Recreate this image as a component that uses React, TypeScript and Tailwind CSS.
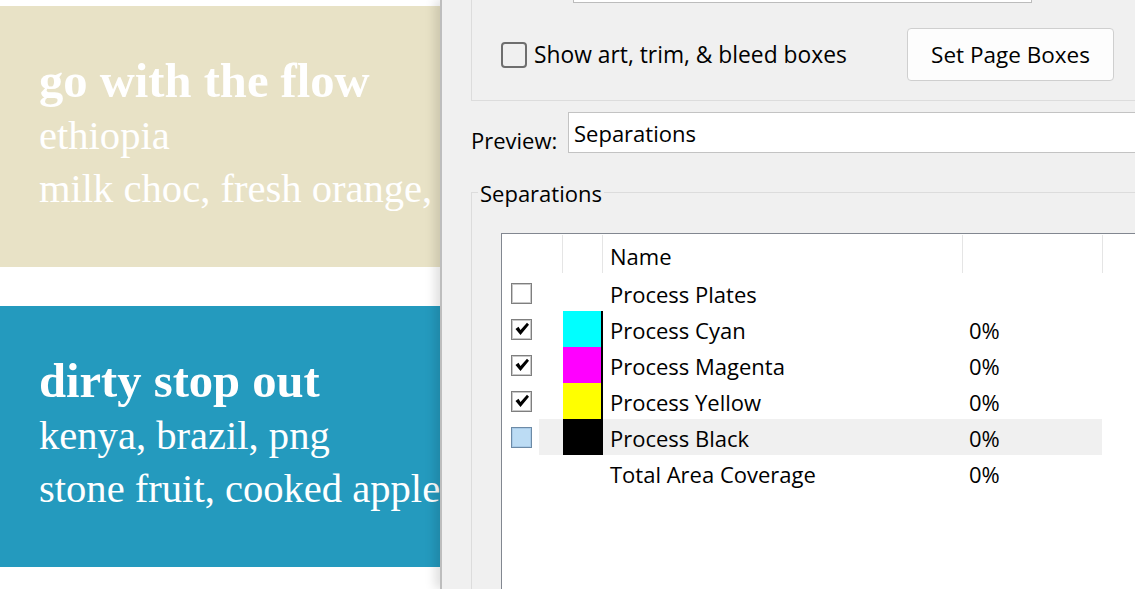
import React from "react";

type Row = {
  name: string;
  swatch?: string;
  pct?: string;
  check: "off" | "on" | "hover" | "none";
  highlight?: boolean;
};

const rows: Row[] = [
  { name: "Process Plates", check: "off" },
  { name: "Process Cyan", swatch: "bg-[#00ffff]", pct: "0%", check: "on" },
  { name: "Process Magenta", swatch: "bg-[#ff00ff]", pct: "0%", check: "on" },
  { name: "Process Yellow", swatch: "bg-[#ffff00]", pct: "0%", check: "on" },
  { name: "Process Black", swatch: "bg-black", pct: "0%", check: "hover", highlight: true },
  { name: "Total Area Coverage", pct: "0%", check: "none" },
];

function ClassicCheck({ state }: { state: Row["check"] }) {
  if (state === "none") return null;
  const hover = state === "hover";
  return (
    <div
      className={`flex h-[21px] w-[21px] items-center justify-center border ${
        hover
          ? "border-[#6c8aa6] bg-[#bcdcf4] shadow-[inset_0_0_0_1px_#a9cbe8]"
          : "border-[#7f7f7f] bg-white shadow-[inset_0_0_0_1px_#c9c9c9]"
      }`}
    >
      {state === "on" && (
        <svg width="16" height="16" viewBox="0 0 16 16">
          <path d="M1.5 8 L4.5 5.8 L6.5 9 L13 1.8 L15 3.8 L6.5 14 Z" fill="#000" />
        </svg>
      )}
    </div>
  );
}

function Card({ bg, title, lines }: { bg: string; title: string; lines: string[] }) {
  return (
    <div className={`h-[261px] w-[440px] overflow-hidden whitespace-nowrap pl-[39px] pt-[47px] text-white ${bg}`}>
      <div className="text-[48.6px] font-bold leading-[56px]">{title}</div>
      {lines.map((l) => (
        <div key={l} className="text-[40.6px] leading-[53px]">
          {l}
        </div>
      ))}
    </div>
  );
}

export default function App() {
  return (
    <div className="flex h-[589px] w-[1135px] overflow-hidden bg-white">
      {/* page behind the dialog */}
      <div className="w-[440px] shrink-0 overflow-hidden pt-[6px] font-['Liberation_Serif',serif]">
        <Card bg="bg-[#e8e2c6]" title="go with the flow" lines={["ethiopia", "milk choc, fresh orange, "]} />
        <div className="h-[39px]" />
        <Card bg="bg-[#249abe]" title="dirty stop out" lines={["kenya, brazil, png", "stone fruit, cooked apple"]} />
      </div>

      {/* print dialog */}
      <div className="relative z-10 flex min-w-0 flex-1 flex-col overflow-hidden border-l-2 border-[#bdbdbd] bg-[#f0f0f0] pl-[29px] font-['Open_Sans',sans-serif] text-[22px] text-black shadow-[-5px_0_10px_rgba(0,0,0,0.13)]">
        {/* top group */}
        <div className="h-[101px] w-[800px] shrink-0 border-b border-l border-[#dcdcdc]">
          <div className="ml-[101px] h-[3px] w-[459px] border-x border-b border-[#bcbcbc] bg-white" />
          <div className="mt-[25px] flex h-[53px] items-center pl-[29px]">
            <div className="flex w-[406px] shrink-0 items-center">
              <div className="h-[26px] w-[26px] shrink-0 rounded-[4px] border-2 border-[#6e6e6e]" />
              <span className="ml-[7px] text-[22.8px] leading-[30px]">Show art, trim, &amp; bleed boxes</span>
            </div>
            <button className="h-[53px] w-[207px] shrink-0 rounded-[4px] border border-[#cfcfcf] bg-[#fdfdfd] text-[22.5px] leading-[30px]">
              Set Page Boxes
            </button>
          </div>
        </div>

        {/* preview */}
        <div className="mt-[11px] flex shrink-0 items-start">
          <div className="w-[97px] shrink-0 pt-[13px] leading-[30px]">Preview:</div>
          <div className="h-[41px] w-[700px] shrink-0 border border-[#c3c3c3] bg-white pl-[5px] pt-[5px] leading-[30px]">
            Separations
          </div>
        </div>

        {/* separations group */}
        <div className="relative mt-[37px] flex w-[800px] flex-1 flex-col border-l border-t border-[#dcdcdc] pt-[40px]">
          <div className="absolute left-[6px] top-[-15px] bg-[#f0f0f0] px-[2px] leading-[30px]">Separations</div>

          <div className="ml-[29px] flex-1 border-l border-t border-[#828790] bg-white">
            {/* header */}
            <div className="flex h-[41px]">
              <div className="w-[61px] pb-[2px] pt-[1px]">
                <div className="h-full border-r border-[#e5e5e5]" />
              </div>
              <div className="w-[40px] pb-[2px] pt-[1px]">
                <div className="h-full border-r border-[#e5e5e5]" />
              </div>
              <div className="w-[360px] pb-[2px] pt-[1px]">
                <div className="h-full border-r border-[#e5e5e5] pl-[7px] pt-[6px] leading-[30px]">Name</div>
              </div>
              <div className="w-[140px] pb-[2px] pt-[1px]">
                <div className="h-full border-r border-[#e5e5e5]" />
              </div>
            </div>

            {/* rows */}
            {rows.map((r) => (
              <div key={r.name} className="flex h-[36px]">
                <div className="flex w-[37px] items-center pl-[9px]">
                  <ClassicCheck state={r.check} />
                </div>
                <div className={`flex h-full w-[563px] ${r.highlight ? "bg-[#f0f0f0]" : ""}`}>
                  <div className="w-[24px]" />
                  <div className={`h-full w-[40px] ${r.swatch ? `${r.swatch} border-r-2 border-black` : ""}`} />
                  <div className="flex w-[359px] items-center pl-[7px] pt-[1px] leading-[30px]">{r.name}</div>
                  <div className="flex w-[140px] items-center pl-[7px] pt-[1px] leading-[30px]">{r.pct}</div>
                </div>
              </div>
            ))}
          </div>
        </div>
      </div>
    </div>
  );
}
